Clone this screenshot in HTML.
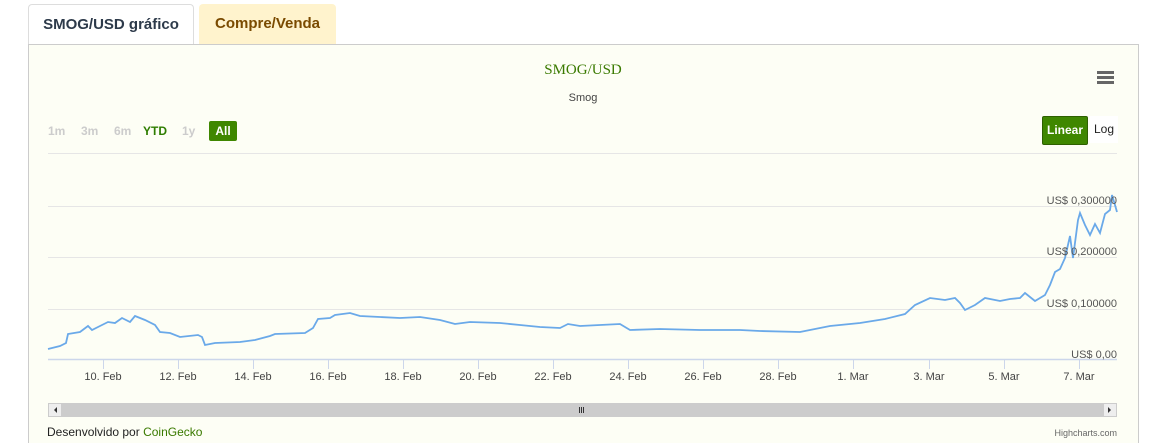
<!DOCTYPE html>
<html><head><meta charset="utf-8"><style>
html,body{margin:0;width:1174px;height:443px;overflow:hidden}
body{background:#fff;font-family:"Liberation Sans",sans-serif;position:relative}
.tab{position:absolute;top:4px;height:40px;box-sizing:border-box;font-weight:bold;font-size:15px;line-height:40px;text-align:center;border-radius:4px 4px 0 0}
.t1{left:28px;width:166px;border:1px solid #ddd;border-bottom:none;background:#fff;color:#2d3a4a}
.t2{left:199px;width:137px;background:#fff3cd;color:#7a4a00}
.panel{position:absolute;left:28px;top:44px;width:1111px;height:399px;box-sizing:border-box;border:1px solid #ccc;border-bottom:none;background:#fdfef5}
.a{position:absolute;font-size:12px}
</style></head><body>
<div class="tab t1">SMOG/USD gráfico</div>
<div class="tab t2">Compre/Venda</div>
<div class="panel"></div>
<div class="a" style="left:0;width:1166px;top:62px;text-align:center;font-family:'Liberation Serif',serif;font-size:15px;color:#3a7a00">SMOG/USD</div>
<div class="a" style="left:0;width:1166px;top:92px;text-align:center;font-size:11px;color:#444">Smog</div>
<div style="position:absolute;left:1097px;top:71px;width:17px;height:3px;background:#666;box-shadow:0 5px 0 #666,0 10px 0 #666"></div>
<div class="a" style="left:48px;top:124px;font-weight:bold;color:#ccc">1m</div>
<div class="a" style="left:81px;top:124px;font-weight:bold;color:#ccc">3m</div>
<div class="a" style="left:114px;top:124px;font-weight:bold;color:#ccc">6m</div>
<div class="a" style="left:143px;top:124px;font-weight:bold;color:#2e7d00">YTD</div>
<div class="a" style="left:182px;top:124px;font-weight:bold;color:#ccc">1y</div>
<div class="a" style="left:209px;top:121px;width:28px;height:20px;background:#3f8700;border-radius:2px;color:#fff;font-weight:bold;text-align:center;line-height:20px">All</div>
<div class="a" style="left:1042px;top:116px;width:44px;height:27px;background:#3f8700;border:1px solid #2e6000;border-radius:2px;color:#fff;font-weight:bold;text-align:center;line-height:27px">Linear</div>
<div class="a" style="left:1090px;top:116px;width:28px;height:27px;background:#fff;line-height:27px;text-align:center;color:#222">Log</div>
<svg style="position:absolute;left:0;top:0" width="1174" height="443">
<g stroke="#e6e6e6" stroke-width="1"><line x1="48" x2="1117" y1="153.5" y2="153.5"/><line x1="48" x2="1117" y1="206.5" y2="206.5"/><line x1="48" x2="1117" y1="257.5" y2="257.5"/><line x1="48" x2="1117" y1="309.5" y2="309.5"/></g>
<line x1="48" x2="1117" y1="359.5" y2="359.5" stroke="#ccd6eb" stroke-width="1.5"/>
<g stroke="#ccd6eb"><line x1="103.5" x2="103.5" y1="359" y2="369"/><line x1="178.5" x2="178.5" y1="359" y2="369"/><line x1="253.5" x2="253.5" y1="359" y2="369"/><line x1="328.5" x2="328.5" y1="359" y2="369"/><line x1="403.5" x2="403.5" y1="359" y2="369"/><line x1="478.5" x2="478.5" y1="359" y2="369"/><line x1="553.5" x2="553.5" y1="359" y2="369"/><line x1="628.5" x2="628.5" y1="359" y2="369"/><line x1="703.5" x2="703.5" y1="359" y2="369"/><line x1="778.5" x2="778.5" y1="359" y2="369"/><line x1="853.5" x2="853.5" y1="359" y2="369"/><line x1="929.5" x2="929.5" y1="359" y2="369"/><line x1="1004.5" x2="1004.5" y1="359" y2="369"/><line x1="1079.5" x2="1079.5" y1="359" y2="369"/></g>
<polyline fill="none" stroke="#6aa9e9" stroke-width="1.8" points="48,349 60,346 66,343 68,334 80,332 88,326 92,330 100,326 108,322 115,323 122,318 130,322 135,316 145,320 155,325 160,332 170,333 180,337 198,335 202,337 205,345 215,343 240,342 255,340 270,336 275,334 305,333 313,328 318,319 330,318 335,315 350,313 360,316 380,317 400,318 420,317 440,320 455,324 470,322 500,323 520,325 540,327 560,328 568,324 580,326 600,325 620,324 630,330 660,329 700,330 740,330 760,331 800,332 830,326 860,323 885,319 905,314 915,305 930,298 945,300 955,298 960,303 965,310 975,305 985,298 1000,301 1010,299 1020,298 1025,293 1035,301 1045,295 1050,285 1055,272 1060,269 1065,258 1070,236 1073,258 1078,220 1080,213 1085,225 1090,235 1095,224 1100,233 1105,214 1110,210 1112,195 1115,205 1117,212"/>
<g font-family="Liberation Sans,sans-serif" font-size="11" fill="#555" text-anchor="end"><text x="1117" y="204">US$ 0,300000</text><text x="1117" y="255">US$ 0,200000</text><text x="1117" y="307">US$ 0,100000</text><text x="1117" y="358">US$ 0,00</text></g>
<g font-family="Liberation Sans,sans-serif" font-size="11" fill="#444" text-anchor="middle"><text x="103" y="380">10. Feb</text><text x="178" y="380">12. Feb</text><text x="253" y="380">14. Feb</text><text x="328" y="380">16. Feb</text><text x="403" y="380">18. Feb</text><text x="478" y="380">20. Feb</text><text x="553" y="380">22. Feb</text><text x="628" y="380">24. Feb</text><text x="703" y="380">26. Feb</text><text x="778" y="380">28. Feb</text><text x="853" y="380">1. Mar</text><text x="929" y="380">3. Mar</text><text x="1004" y="380">5. Mar</text><text x="1079" y="380">7. Mar</text></g>
<rect x="48" y="403" width="1069" height="14" fill="#ccc"/>
<rect x="48.5" y="403.5" width="13" height="13" fill="#eee" stroke="#ccc"/>
<rect x="1103.5" y="403.5" width="13" height="13" fill="#eee" stroke="#ccc"/>
<path d="M57 407v6l-3-3z" fill="#333"/><path d="M1108 407v6l3-3z" fill="#333"/>
<g stroke="#333"><line x1="579.5" x2="579.5" y1="407" y2="413"/><line x1="581.5" x2="581.5" y1="407" y2="413"/><line x1="583.5" x2="583.5" y1="407" y2="413"/></g>
<text x="1117" y="436" text-anchor="end" font-family="Liberation Sans,sans-serif" font-size="9" fill="#666">Highcharts.com</text>
</svg>
<div class="a" style="left:47px;top:425px;color:#222">Desenvolvido por <span style="color:#3a7a00">CoinGecko</span></div>
</body></html>
